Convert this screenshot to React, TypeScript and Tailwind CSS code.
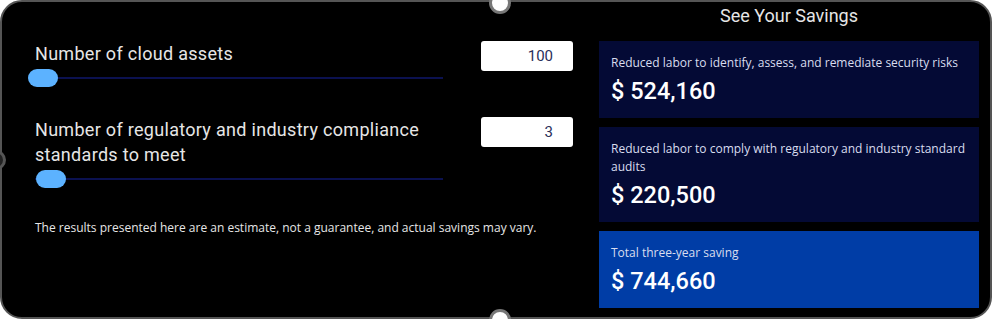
import { useState } from "react";

const font = { fontFamily: "Roboto, 'Noto Sans', sans-serif" };
const small = { fontFamily: "'Open Sans', 'Noto Sans', sans-serif" };

function SliderRow({
  label,
  value,
  thumbLeft,
}: {
  label: React.ReactNode;
  value: string;
  thumbLeft: string;
}) {
  return (
    <div className="flex items-start">
      <div className="w-[408px]">
        <div className="text-[18px] leading-[25px] tracking-[0.3px] text-[#e6e6e6]">{label}</div>
        <div className="relative mt-[11px] h-[2px] bg-[#0b1150]">
          <div className={`absolute top-[-8px] h-[18px] w-[30px] rounded-full bg-[#5cb2ff] ${thumbLeft}`} />
        </div>
      </div>
      <input
        className="ml-[38px] h-[30px] w-[92px] rounded-[3px] bg-white pl-[18px] pr-[20px] text-right text-[15px] text-[#2a2f5a] outline-none"
        defaultValue={value}
      />
    </div>
  );
}

function SavingCard({
  title,
  amount,
  dark = true,
  height,
}: {
  title: string;
  amount: string;
  dark?: boolean;
  height: string;
}) {
  return (
    <div className={`${height} pl-[12px] pr-[8px] pt-[13px] ${dark ? "bg-[#040a35]" : "bg-[#003da6]"}`}>
      <div className="text-[12px] leading-[18px] text-[#d9ddef]" style={small}>
        {title}
      </div>
      <div className="mt-[5px] text-[23.5px] font-medium leading-[28px] text-white">{amount}</div>
    </div>
  );
}

export default function App() {
  const [assets] = useState("100");
  const [standards] = useState("3");

  return (
    <div className="relative h-[319px] w-[992px] overflow-hidden bg-white" style={font}>
      <div className="flex h-full rounded-[22px] border-2 border-[#555] bg-black">
        <div className="w-[597px] pl-[33px] pt-[39px]">
          <SliderRow label="Number of cloud assets" value={assets} thumbLeft="left-[-7px]" />
          <div className="mt-[38px]">
            <SliderRow
              label={
                <>
                  Number of regulatory and industry compliance
                  <br />
                  standards to meet
                </>
              }
              value={standards}
              thumbLeft="left-[1px]"
            />
          </div>
          <p className="mt-[41px] text-[12px] leading-[14px] text-[#e6e6e6]" style={small}>
            The results presented here are an estimate, not a guarantee, and actual savings may vary.
          </p>
        </div>
        <div className="w-[380px]">
          <div className="h-[39px] pt-[2px] text-center text-[18px] leading-[24px] text-[#e6e6e6]">
            See Your Savings
          </div>
          <div className="flex flex-col gap-[9px]">
            <SavingCard
              height="h-[77px]"
              title="Reduced labor to identify, assess, and remediate security risks"
              amount="$ 524,160"
            />
            <SavingCard
              height="h-[95px]"
              title="Reduced labor to comply with regulatory and industry standard audits"
              amount="$ 220,500"
            />
            <SavingCard height="h-[77px]" title="Total three-year saving" amount="$ 744,660" dark={false} />
          </div>
        </div>
      </div>
      <div className="absolute left-[489px] top-[-8px] h-[22px] w-[22px] rounded-full border-[3px] border-[#777] bg-white" />
      <div className="absolute left-[489px] top-[309px] h-[22px] w-[22px] rounded-full border-[3px] border-[#777] bg-white" />
      <div className="absolute left-[-14px] top-[150px] h-[20px] w-[20px] rounded-full border-[3px] border-[#555] bg-[#222]" />
    </div>
  );
}
